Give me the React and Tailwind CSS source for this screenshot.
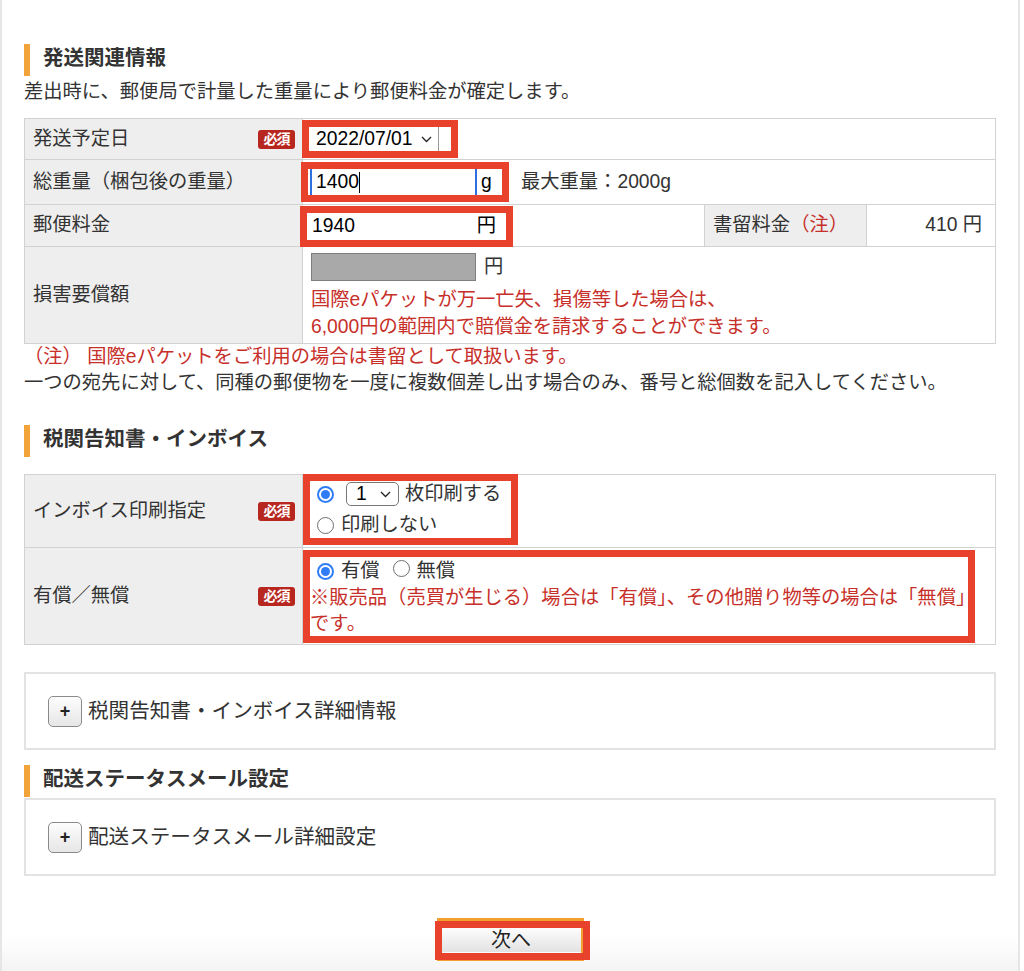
import React from 'react';

const Badge = () => (
  <span className="inline-flex items-center justify-center w-[37px] h-[19px] rounded-[3px] bg-[#b7261f] text-white text-[14px] font-bold leading-none tracking-[-1px]">
    必須
  </span>
);

const Chevron = () => (
  <svg width="11" height="7" viewBox="0 0 11 7" className="shrink-0">
    <path d="M1 1l4.5 4.5L10 1" stroke="#222" strokeWidth="1.3" fill="none" />
  </svg>
);

const Radio = ({ checked }) =>
  checked ? (
    <span className="inline-flex w-[17px] h-[17px] shrink-0 rounded-full border-2 border-[#2f7cf6] bg-white items-center justify-center">
      <span className="w-[9px] h-[9px] rounded-full bg-[#2f7cf6]" />
    </span>
  ) : (
    <span className="inline-block w-[17px] h-[17px] shrink-0 rounded-full border border-[#6f6f6f] bg-white" />
  );

const Heading = ({ children }) => (
  <div className="h-[32px] border-l-[6px] border-[#f2a33a] pl-[13px]">
    <h2 className="text-[20.5px] font-bold leading-[28px] text-[#333]">{children}</h2>
  </div>
);

const Label = ({ children, required, className = '' }) => (
  <div className={`w-[278px] shrink-0 bg-[#eeeeee] border-r border-[#d2d2d2] flex items-center justify-between pl-[8px] pr-[7px] ${className}`}>
    <span>{children}</span>
    {required && <Badge />}
  </div>
);

const PlusBox = ({ children, className = '' }) => (
  <div className={`h-[78px] border-2 border-[#e3e3e3] flex items-center pl-[22px] ${className}`}>
    <button className="w-[34px] h-[31px] rounded-[5px] border border-[#8a8a8a] bg-linear-to-b from-[#fdfdfd] to-[#e6e6e6] text-[18px] font-bold leading-none text-[#222]">
      +
    </button>
    <span className="ml-[6px] text-[20.6px]">{children}</span>
  </div>
);

export default function App() {
  return (
    <div className="w-[1020px] h-[971px] overflow-hidden border-x-2 border-[#e6e6e6] px-[22px] pt-[44px] bg-[linear-gradient(to_bottom,#ffffff_935px,#f4f4f4_971px)] font-['Liberation_Sans','Noto_Sans_CJK_JP',sans-serif] text-[19.3px] text-[#333]">
      {/* 発送関連情報 */}
      <Heading>発送関連情報</Heading>
      <p className="mt-[3px] leading-[26px]">差出時に、郵便局で計量した重量により郵便料金が確定します。</p>

      <div className="mt-[13px] border border-[#d2d2d2]">
        {/* 発送予定日 */}
        <div className="flex h-[40px]">
          <Label required>発送予定日</Label>
          <div className="flex-1 flex items-center">
            <div className="-ml-[1px] w-[156px] h-[38px] border-[7px] border-[#e8412c] bg-white flex">
              <div className="w-[130px] h-full flex items-center pl-[7px] border-r border-[#9a9a9a] text-black">
                <span>2022/07/01</span>
                <span className="ml-[8px]"><Chevron /></span>
              </div>
            </div>
          </div>
        </div>

        {/* 総重量 */}
        <div className="flex h-[45px] border-t border-[#d2d2d2]">
          <Label>総重量（梱包後の重量）</Label>
          <div className="flex-1 flex items-center">
            <div className="-ml-[2px] w-[208px] h-[40px] border-[7px] border-[#e8412c] bg-white flex items-center">
              <div className="ml-[2px] w-[167px] h-full border-x-2 border-[#2f6fe0] flex items-center pl-[4px] text-black">
                <span>1400</span>
                <span className="w-[1px] h-[21px] bg-black" />
              </div>
              <span className="pl-[4px] text-black">g</span>
            </div>
            <span className="ml-[12px]">最大重量：2000g</span>
          </div>
        </div>

        {/* 郵便料金 */}
        <div className="flex h-[42px] border-t border-[#d2d2d2]">
          <Label>郵便料金</Label>
          <div className="w-[402px] shrink-0 border-r border-[#d2d2d2] flex items-start">
            <div className="-ml-[3px] mt-[1px] w-[213px] h-[41px] border-[7px] border-[#e8412c] bg-white flex items-center justify-between pl-[5px] pr-[10px] text-black">
              <span>1940</span>
              <span>円</span>
            </div>
          </div>
          <div className="w-[162px] shrink-0 bg-[#eeeeee] border-r border-[#d2d2d2] flex items-center pl-[8px]">
            書留料金<span className="text-[#c7302a]">（注）</span>
          </div>
          <div className="flex-1 flex items-center justify-end pr-[13px]">410 円</div>
        </div>

        {/* 損害要償額 */}
        <div className="flex h-[97px] border-t border-[#d2d2d2]">
          <Label>損害要償額</Label>
          <div className="flex-1 pl-[8px] pt-[6px]">
            <div className="flex items-center">
              <div className="w-[165px] h-[28px] border border-[#7f7f7f] bg-[#a9a9a9]" />
              <span className="ml-[8px]">円</span>
            </div>
            <div className="mt-[4px] leading-[27px] text-[#c7302a]">
              <p>国際eパケットが万一亡失、損傷等した場合は、</p>
              <p>6,000円の範囲内で賠償金を請求することができます。</p>
            </div>
          </div>
        </div>
      </div>

      <p className="leading-[26px] text-[#c7302a]">（注） 国際eパケットをご利用の場合は書留として取扱います。</p>
      <p className="leading-[26px]">一つの宛先に対して、同種の郵便物を一度に複数個差し出す場合のみ、番号と総個数を記入してください。</p>

      {/* 税関告知書・インボイス */}
      <div className="mt-[29px]">
        <Heading>税関告知書・インボイス</Heading>
      </div>

      <div className="mt-[17px] border border-[#d2d2d2]">
        <div className="flex h-[72px]">
          <Label required>インボイス印刷指定</Label>
          <div className="flex-1 flex items-start">
            <div className="-mt-[1px] w-[215px] h-[71px] border-[7px] border-[#e8412c] bg-white flex flex-col gap-[5px]">
              <div className="h-[26px] flex items-center pl-[7px]">
                <Radio checked />
                <div className="ml-[12px] w-[53px] h-[24px] rounded-[5px] border border-[#777] flex items-center justify-between pl-[9px] pr-[7px] text-black">
                  <span>1</span>
                  <Chevron />
                </div>
                <span className="ml-[6px]">枚印刷する</span>
              </div>
              <div className="h-[26px] flex items-center pl-[7px]">
                <Radio />
                <span className="ml-[7px]">印刷しない</span>
              </div>
            </div>
          </div>
        </div>

        <div className="flex h-[97px] border-t border-[#d2d2d2]">
          <Label required>有償／無償</Label>
          <div className="flex-1 flex items-start">
            <div className="mt-[2px] w-[672px] h-[93px] border-[7px] border-[#e8412c] bg-white">
              <div className="h-[28px] flex items-center pl-[7px]">
                <Radio checked />
                <span className="ml-[7px]">有償</span>
                <span className="ml-[13px]"><Radio /></span>
                <span className="ml-[7px]">無償</span>
              </div>
              <p className="leading-[26px] text-[#c7302a] whitespace-nowrap">
                ※販売品（売買が生じる）場合は「有償」、その他贈り物等の場合は「無償」
                <br />
                です。
              </p>
            </div>
          </div>
        </div>
      </div>

      <PlusBox className="mt-[27px]">税関告知書・インボイス詳細情報</PlusBox>

      {/* 配送ステータスメール設定 */}
      <div className="mt-[15px]">
        <Heading>配送ステータスメール設定</Heading>
      </div>
      <PlusBox className="mt-[1px]">配送ステータスメール詳細設定</PlusBox>

      <div className="mt-[42px] flex justify-center">
        <div className="relative w-[147px] h-[43px] border-[3px] border-[#f3a02f]">
          <button className="ml-[2px] mt-[7px] w-[139px] h-[24px] bg-linear-to-b from-[#fdfdfd] to-[#e2e2e2] text-[20px] leading-none text-[#222]">
            次へ
          </button>
          <div className="absolute -left-[5px] top-0 w-[155px] h-[39px] border-[7px] border-[#e8412c] pointer-events-none" />
        </div>
      </div>
    </div>
  );
}
